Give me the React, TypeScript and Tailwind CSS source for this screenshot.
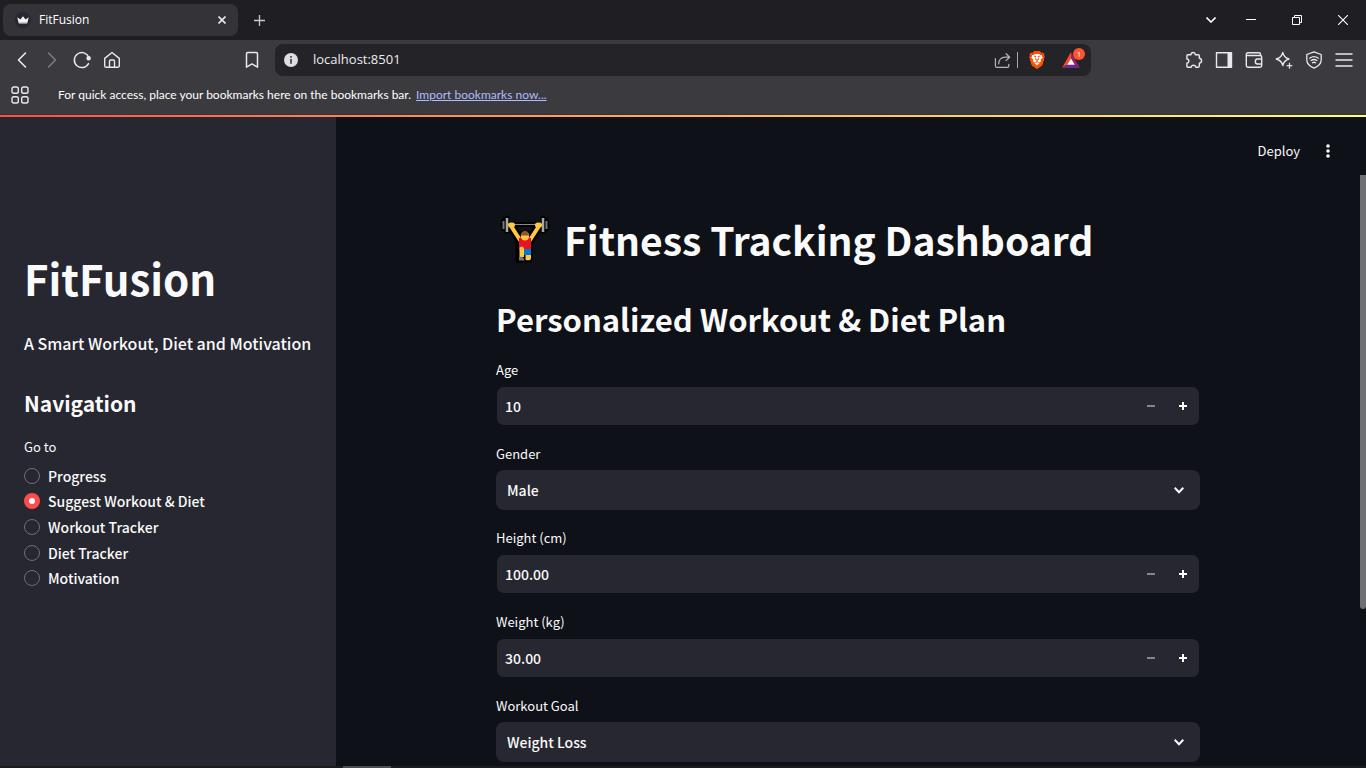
import { useState } from "react";
import type { ReactNode } from "react";
import { SiBrave } from "react-icons/si";

function IconButton({ label, children, className = "w-[30px]" }: { label: string; children: ReactNode; className?: string }) {
  return (
    <button type="button" aria-label={label} className={"flex h-8 shrink-0 items-center justify-center text-[#e9e9ed] " + className}>
      {children}
    </button>
  );
}

function Stroke({ size = 18, width = 1.4, children }: { size?: number; width?: number; children: ReactNode }) {
  return (
    <svg width={size} height={size} viewBox="0 0 18 18" fill="none" stroke="currentColor" strokeWidth={width} strokeLinecap="round" strokeLinejoin="round" aria-hidden="true">
      {children}
    </svg>
  );
}

function TabStrip() {
  return (
    <div className="flex h-10 items-center bg-[#1f1e22] pl-[3px]">
      <div className="flex h-8 w-[235px] items-center rounded-lg bg-[#343338] pr-1 pl-3">
        <svg width="16" height="16" viewBox="0 0 16 16" aria-hidden="true">
          <circle cx="8" cy="8" r="8" fill="#262730" />
          <path d="M2.2 5.2 5.4 7.4 8 4.2l2.6 3.2 3.2-2.2-1.6 6H3.8Z" fill="#f4f4f6" />
          <path d="M3.6 10.2h8.8l-.3 1.2H3.9Z" fill="#b8b8bd" />
        </svg>
        <span className="ml-2 flex-1 text-xs text-white">FitFusion</span>
        <IconButton label="Close tab" className="w-6">
          <svg width="8" height="8" viewBox="0 0 8 8" stroke="currentColor" strokeWidth="1.6" aria-hidden="true">
            <path d="m.5.5 7 7m0-7-7 7" />
          </svg>
        </IconButton>
      </div>
      <IconButton label="New tab" className="ml-1.5 w-[30px]">
        <svg width="11" height="11" viewBox="0 0 11 11" stroke="#c8c8cc" strokeWidth="1.3" aria-hidden="true">
          <path d="M5.5 0v11M0 5.5h11" />
        </svg>
      </IconButton>
      <div className="ml-auto flex items-center">
        <IconButton label="Search tabs" className="mr-0.5 w-[30px]">
          <svg width="10" height="6" viewBox="0 0 10 6" fill="none" stroke="#fff" strokeWidth="1.6" aria-hidden="true">
            <path d="m.5.5 4.500 4.500L9.500.5" />
          </svg>
        </IconButton>
        <IconButton label="Minimize" className="w-[46px]">
          <svg width="10" height="10" viewBox="0 0 10 10" stroke="#fff" aria-hidden="true">
            <path d="M0 4.500h10" />
          </svg>
        </IconButton>
        <IconButton label="Restore" className="w-[46px]">
          <svg width="10" height="10" viewBox="0 0 10 10" fill="none" stroke="#fff" aria-hidden="true">
            <path d="M.5 2.500h7v7h-7ZM2.500 2.500v-2h7v7h-2" />
          </svg>
        </IconButton>
        <IconButton label="Close" className="w-[46px]">
          <svg width="10" height="10" viewBox="0 0 10 10" stroke="#fff" strokeWidth="1.1" aria-hidden="true">
            <path d="m0 0 10 10M10 0 0 10" />
          </svg>
        </IconButton>
      </div>
    </div>
  );
}

function Toolbar() {
  return (
    <div className="grid h-10 grid-cols-[275px_1fr_275px] items-center bg-[#3b3a3e]">
      <div className="flex items-center justify-between pr-2 pl-[7px]">
        <div className="flex">
          <IconButton label="Back">
            <Stroke width={1.6}><path d="M12.500 2 5.500 9l7 7" /></Stroke>
          </IconButton>
          <IconButton label="Forward">
            <span className="text-[#7d7c82]"><Stroke width={1.6}><path d="m5.500 2 7 7-7 7" /></Stroke></span>
          </IconButton>
          <IconButton label="Reload">
            <Stroke width={1.5}>
              <path d="M15.800 6.200A7.500 7.500 0 1 0 15.500 12.600" />
              <circle cx="15.600" cy="7.200" r="1.500" fill="currentColor" />
            </Stroke>
          </IconButton>
          <IconButton label="Home">
            <Stroke><path d="M1.700 7.400 9 1.500l7.300 5.900v7.300a1.600 1.600 0 0 1-1.600 1.600H3.300a1.600 1.600 0 0 1-1.600-1.600ZM6.500 16V10.300c0-.8.500-1.300 1.300-1.300h2.400c.8 0 1.300.5 1.300 1.300V16" /></Stroke>
          </IconButton>
        </div>
        <IconButton label="Bookmark this page">
          <Stroke width={1.5}><path d="M3.500 16.200V2.700c0-.7.500-1.200 1.200-1.200h8.600c.7 0 1.200.5 1.200 1.200v13.500L9 12.900Z" /></Stroke>
        </IconButton>
      </div>
      <div className="flex h-8 items-center rounded-lg bg-[#242327] pr-[3px] pl-[9px]">
        <svg width="14" height="14" viewBox="0 0 14 14" aria-hidden="true">
          <circle cx="7" cy="7" r="7" fill="#dedee2" />
          <path d="M6.100 6h1.800v4.800H6.100ZM6.100 3h1.800v1.800H6.100Z" fill="#4a494e" />
        </svg>
        <input aria-label="Address" defaultValue="localhost:8501" className="ml-[15px] min-w-0 flex-1 bg-transparent text-[13px] text-[#ececf0] outline-none" />
        <IconButton label="Share">
          <span className="text-[#b4b4b9]">
            <Stroke size={17} width={1.3}>
              <path d="M1.500 7v7.500c0 1 .7 1.700 1.700 1.700H14c1 0 1.700-.7 1.700-1.700V13M5 12.500c0-4.500 2.800-7 7-7h4.300M12.800 1.800l3.700 3.700-3.700 3.700" />
            </Stroke>
          </span>
        </IconButton>
        <span className="h-4 w-px bg-[#a5a5aa]" />
        <IconButton label="Brave Shields" className="ml-1 w-[30px]">
          <span className="rounded-full bg-[radial-gradient(circle,#fff_50%,transparent_52%)] text-lg text-[#ff5000]"><SiBrave /></span>
        </IconButton>
        <IconButton label="Brave Rewards" className="relative ml-0.5 w-[34px]">
          <svg width="18" height="16" viewBox="0 0 18 16" aria-hidden="true">
            <path d="M9 0v7L5.500 12.500 0 16Z" fill="#ff4724" />
            <path d="M9 0v7l3.500 5.500L18 16Z" fill="#9e1f63" />
            <path d="M0 16 5.500 12.500h7L18 16Z" fill="#662d91" />
            <path d="M9 6.500 5.200 12.700h7.600Z" fill="#fff" />
          </svg>
          <span className="absolute top-1 right-[3px] flex size-3 items-center justify-center rounded-full bg-[#ff5430] text-[8px] text-white">1</span>
        </IconButton>
      </div>
      <div className="flex justify-end pr-[7px]">
        <IconButton label="Extensions">
          <Stroke><path d="M3 3.700h2.900c0-3 4.400-3 4.400 0h3c.6 0 1 .4 1 1v2.600c3 .4 3 4.400 0 4.800v3c0 .7-.4 1.100-1 1.100h-2.500c-.2-2.700-4.300-2.700-4.600 0H3c-.7 0-1.100-.4-1.100-1v-3c2.700-.3 2.700-3.900 0-4.200V4.800c0-.7.400-1.100 1.100-1.100Z" /></Stroke>
        </IconButton>
        <IconButton label="Sidebar">
          <Stroke><path d="M1.500 1.700h15v14.600h-15Z" /><path d="M12.500 2h4v14h-4Z" fill="currentColor" stroke="none" /></Stroke>
        </IconButton>
        <IconButton label="Wallet">
          <Stroke><path d="M15.500 4.500V3.300c0-.9-.6-1.500-1.500-1.500H2.800c-.9 0-1.500.6-1.500 1.500v11.200c0 1 .7 1.700 1.700 1.700h12c1 0 1.700-.7 1.700-1.700V6.200c0-1-.7-1.700-1.700-1.700H1.500M16.500 8h-4.200c-2.600 0-2.600 5 0 5h4.200" /></Stroke>
        </IconButton>
        <IconButton label="Leo AI">
          <Stroke width={1.300}><path d="M7.800 1.300c.8 4 2.400 5.700 6.200 6.700-3.800 1-5.400 2.700-6.200 6.700C7 10.700 5 9 1.200 8 5 7 7 5.300 7.800 1.300ZM14.500 12.500v4.500M12.200 14.700h4.600" /></Stroke>
        </IconButton>
        <IconButton label="VPN">
          <Stroke width={1.300}><path d="m9 .9 7.200 2.600v5.300c0 4-2.800 6.600-7.200 8.300-4.400-1.700-7.200-4.300-7.200-8.300V3.500ZM4.700 7.200c2.700-2 5.900-2 8.600 0M6.100 9.500c1.900-1.300 3.900-1.300 5.800 0M7.500 11.800c1-.7 2-.7 3 0" /></Stroke>
        </IconButton>
        <IconButton label="Menu">
          <Stroke width={1.400}><path d="M1 3h16M1 9h16M1 15h16" /></Stroke>
        </IconButton>
      </div>
    </div>
  );
}

function BookmarksBar() {
  return (
    <div className="flex h-[35px] items-center border-b border-[#333236] bg-[#3b3a3e] pb-[5px] pl-[5px] font-[Lato,sans-serif] text-xs text-white">
      <IconButton label="Apps">
        <Stroke>
          <rect x="1" y="1" width="6.300" height="6.300" rx="1.800" />
          <rect x="10.700" y="1" width="6.300" height="6.300" rx="1.800" />
          <rect x="1" y="10.700" width="6.300" height="6.300" rx="1.800" />
          <rect x="10.700" y="10.700" width="6.300" height="6.300" rx="1.800" />
        </Stroke>
      </IconButton>
      <span className="ml-[23px]">For quick access, place your bookmarks here on the bookmarks bar.</span>
      <a href="#import" className="ml-[5px] text-[#aebcff] underline">Import bookmarks now...</a>
    </div>
  );
}

const pages = ["Progress", "Suggest Workout & Diet", "Workout Tracker", "Diet Tracker", "Motivation"];

function Sidebar() {
  const [page, setPage] = useState(pages[1]);
  return (
    <aside className="w-[336px] shrink-0 bg-[#262730] px-6 pt-[135px]">
      <h1 className="text-[42px] leading-[52px] font-bold">FitFusion</h1>
      <p className="mt-[27px] text-base leading-6 font-medium">A Smart Workout, Diet and Motivation</p>
      <h2 className="mt-8 text-[21px] leading-8 font-bold">Navigation</h2>
      <fieldset className="mt-[18px]">
        <legend className="text-[13px] leading-5">Go to</legend>
        <div className="mt-1.5 grid h-32 grid-rows-5">
          {pages.map((name) => (
            <label key={name} className="flex items-center gap-2 text-sm leading-6 font-medium">
              <input
                type="radio"
                name="page"
                checked={page === name}
                onChange={() => setPage(name)}
                className="size-4 appearance-none rounded-full border border-[#6d6e78] checked:border-[5px] checked:border-[#ff4b4b] checked:bg-white"
              />
              {name}
            </label>
          ))}
        </div>
      </fieldset>
    </aside>
  );
}

function NumberField({ id, label, start, digits }: { id: string; label: string; start: number; digits: number }) {
  const [value, setValue] = useState(start.toFixed(digits));
  const step = (delta: number) => setValue(Math.max(start, Number(value) + delta).toFixed(digits));
  return (
    <div>
      <label htmlFor={id} className="block text-[13px] leading-5">{label}</label>
      <div className="mt-1.5 flex h-10 rounded-lg border border-[#0e1117] bg-[#262730]">
        <input id={id} inputMode="decimal" value={value} onChange={(e) => setValue(e.target.value)} className="min-w-0 flex-1 bg-transparent px-2 text-sm font-medium outline-none" />
        <button type="button" aria-label={"Decrease " + label} onClick={() => step(-1)} className="flex w-8 items-center justify-center">
          <svg width="8" height="8" viewBox="0 0 8 8" aria-hidden="true"><path d="M0 3h8v2H0Z" fill="#83848f" /></svg>
        </button>
        <button type="button" aria-label={"Increase " + label} onClick={() => step(1)} className="flex w-8 items-center justify-center">
          <svg width="8" height="8" viewBox="0 0 8 8" aria-hidden="true"><path d="M0 3h3V0h2v3h3v2H5v3H3V5H0Z" fill="#fff" /></svg>
        </button>
      </div>
    </div>
  );
}

function SelectField({ id, label, options }: { id: string; label: string; options: string[] }) {
  return (
    <div>
      <label htmlFor={id} className="block text-[13px] leading-5">{label}</label>
      <div className="mt-1.5 grid h-10 items-center rounded-lg bg-[#262730]">
        <select id={id} className="col-start-1 row-start-1 h-10 appearance-none bg-transparent px-[11px] text-sm font-medium outline-none">
          {options.map((option) => <option key={option}>{option}</option>)}
        </select>
        <svg width="10" height="7" viewBox="0 0 10 7" fill="none" stroke="#fafafa" strokeWidth="2" className="pointer-events-none col-start-1 row-start-1 mr-4 justify-self-end" aria-hidden="true">
          <path d="m.7.8 4.300 4.400L9.300.8" />
        </svg>
      </div>
    </div>
  );
}

function WeightLifter() {
  return (
    <svg width="50" height="50" viewBox="0 0 50 50" strokeLinecap="round" strokeLinejoin="round" role="img" aria-label="Weight lifter">
      <g fill="none" stroke="#000" strokeWidth="5">
        <path d="M4 6v9M7 4v13M43 4v13M46 6v9M3 10.500h44" />
        <path d="M11 12 20 26M39 12 30 26" strokeWidth="9" />
        <path d="M20 20h10v26H18V24Z" fill="#000" />
      </g>
      <path d="M8 10.500h34" stroke="#8b8b8b" />
      <path d="M3.500 7v8M46.500 7v8" stroke="#777" strokeWidth="2" strokeLinecap="butt" />
      <path d="M7 4v14M43 4v14" stroke="#a8a8a8" strokeWidth="2.500" strokeLinecap="butt" />
      <path d="M11 12 20 26M39 12 30 26" stroke="#ffc83d" strokeWidth="4" fill="none" />
      <path d="M10.500 11h2M37.500 11h2" stroke="#ffc83d" strokeWidth="5" />
      <path d="M19 24h12v11.500H19Z" fill="#e81224" />
      <ellipse cx="25" cy="22" rx="4.200" ry="4.500" fill="#ffc83d" />
      <path d="M21 21.500c0-6 8-6 8 0Z" fill="#8e562e" />
      <path d="M24 35h7v6h-7Z" fill="#0078d7" />
      <path d="M19.500 43v-8c0-3.500 4.500-3.500 4.500 0v8M25.500 41H31v3.500c0 2-4 2.500-5.500 1Z" fill="#ffc83d" />
      <path d="M19 43c3-1 5 1 5.500 3.500H19Z" fill="#767676" />
    </svg>
  );
}

function Dashboard() {
  return (
    <main className="flex min-w-0 flex-1 overflow-hidden bg-[#0e1117]">
      <div className="min-w-0 flex-1">
        <header className="flex h-[68px] items-center justify-end gap-4 pr-5">
          <button type="button" className="text-[13px] leading-5">Deploy</button>
          <button type="button" aria-label="Main menu" className="flex size-6 items-center justify-center">
            <svg width="4" height="14" viewBox="0 0 4 14" fill="#fafafa" aria-hidden="true">
              <circle cx="2" cy="2" r="1.800" /><circle cx="2" cy="7" r="1.800" /><circle cx="2" cy="12" r="1.800" />
            </svg>
          </button>
        </header>
        <div className="mx-auto max-w-[736px] px-4 pt-7">
          <h1 className="flex items-center gap-3.5 pl-1 text-[39px] leading-[52px] font-bold">
            <WeightLifter />
            Fitness Tracking Dashboard
          </h1>
          <h2 className="mt-8 text-[31px] leading-[44px] font-bold">Personalized Workout &amp; Diet Plan</h2>
          <form className="mt-[19px] flex flex-col gap-[18px]">
            <NumberField id="age" label="Age" start={10} digits={0} />
            <SelectField id="gender" label="Gender" options={["Male", "Female"]} />
            <NumberField id="height" label="Height (cm)" start={100} digits={2} />
            <NumberField id="weight" label="Weight (kg)" start={30} digits={2} />
            <SelectField id="goal" label="Workout Goal" options={["Weight Loss", "Muscle Gain"]} />
          </form>
        </div>
      </div>
      <div className="w-1.5 shrink-0 pt-[58px]">
        <div className="h-[434px] rounded-b-sm bg-[#6f7073]" />
      </div>
    </main>
  );
}

export default function App() {
  return (
    <div className="flex h-screen flex-col overflow-hidden bg-[#1c1c1c]">
      <div className="shrink-0 font-['Open_Sans','Noto_Sans',sans-serif]">
        <TabStrip />
        <Toolbar />
        <BookmarksBar />
      </div>
      <div className="h-0.5 shrink-0 bg-linear-to-r from-[#ff4b4b] to-[#fffd80]" />
      <div className="flex min-h-0 flex-1 overflow-hidden font-['Noto_Sans_CJK_SC',sans-serif] text-[#fafafa]">
        <Sidebar />
        <Dashboard />
      </div>
      <div className="h-0.5 shrink-0 pl-[343px]">
        <div className="h-0.5 w-12 bg-[#4f4f4f]" />
      </div>
    </div>
  );
}
